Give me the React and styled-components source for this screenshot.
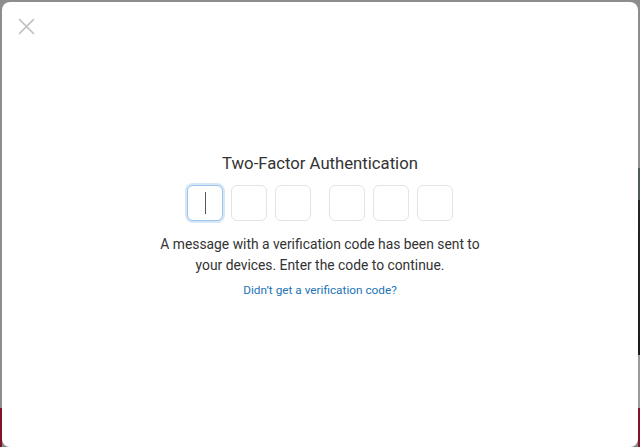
import React from "react";
import styled, { createGlobalStyle } from "styled-components";

const Global = createGlobalStyle`
  html, body { margin: 0; padding: 0; }
  body {
    width: 640px;
    height: 447px;
    overflow: hidden;
    background: #8a8a8a;
    font-family: Roboto, "Liberation Sans", sans-serif;
  }
`;

const Backdrop = styled.div`
  width: 640px;
  height: 447px;
  background: #8d8d8d;
  display: grid;
  grid-template-columns: 2px 1fr 2px;
  grid-template-rows: 2px 1fr;
`;

const TopEdge = styled.div`
  grid-column: 1 / -1;
`;

const LeftEdge = styled.div`
  background: linear-gradient(to bottom, #8d8d8d 0, #8d8d8d 406px, #7e1426 406px);
`;

const RightEdge = styled.div`
  background: linear-gradient(
    to bottom,
    #8d8d8d 0px,
    #8d8d8d 166px,
    #4f5c5a 166px,
    #4f5c5a 198px,
    #2a2424 198px,
    #1d1b1b 353px,
    #9a9a9a 353px,
    #9a9a9a 406px,
    #7e1426 406px
  );
`;

const Modal = styled.div`
  position: relative;
  background: #ffffff;
  border-radius: 8px;
  display: flex;
  flex-direction: column;
  align-items: center;
  padding-top: 150px;
  box-sizing: border-box;
`;

const Close = styled.button`
  position: absolute;
  left: 15px;
  top: 15px;
  width: 19px;
  height: 19px;
  padding: 0;
  border: none;
  background: transparent;
  display: flex;
  align-items: center;
  justify-content: center;
`;

const Title = styled.h1`
  margin: 0;
  font-size: 16.7px;
  line-height: 24px;
  font-weight: 400;
  color: #333333;
`;

const Codes = styled.div`
  display: flex;
  gap: 18px;
  margin-top: 9px;
`;

const Group = styled.div`
  display: flex;
  gap: 8px;
`;

const Digit = styled.div`
  width: 36px;
  height: 36px;
  box-sizing: border-box;
  border-radius: 6px;
  border: 1px solid ${(p) => (p.$active ? "#9cc3e8" : "#e3e3e3")};
  box-shadow: ${(p) => (p.$active ? "0 0 0 2px #d6e7f7" : "none")};
  background: #fff;
  display: flex;
  align-items: center;
  justify-content: center;
`;

const Caret = styled.span`
  width: 1px;
  height: 22px;
  background: #555;
`;

const Message = styled.p`
  margin: 13px 0 0;
  font-size: 13.85px;
  line-height: 21px;
  color: #333333;
  text-align: center;
  width: 330px;
`;

const Link = styled.a`
  margin-top: 5px;
  font-size: 11.8px;
  line-height: 18px;
  color: #2274b5;
  text-decoration: none;
`;

export default function App() {
  return (
    <>
      <Global />
      <Backdrop>
        <TopEdge />
        <LeftEdge />
        <Modal>
          <Close aria-label="Close">
            <svg width="17" height="17" viewBox="0 0 17 17">
              <path d="M1.5 1.5 L15.5 15.5 M15.5 1.5 L1.5 15.5" stroke="#bdbdbd" strokeWidth="1.6" strokeLinecap="round" />
            </svg>
          </Close>
          <Title>Two-Factor Authentication</Title>
          <Codes>
            <Group>
              <Digit $active>
                <Caret />
              </Digit>
              <Digit />
              <Digit />
            </Group>
            <Group>
              <Digit />
              <Digit />
              <Digit />
            </Group>
          </Codes>
          <Message>
            A message with a verification code has been sent to your devices. Enter the code to continue.
          </Message>
          <Link href="#">Didn’t get a verification code?</Link>
        </Modal>
        <RightEdge />
      </Backdrop>
    </>
  );
}
